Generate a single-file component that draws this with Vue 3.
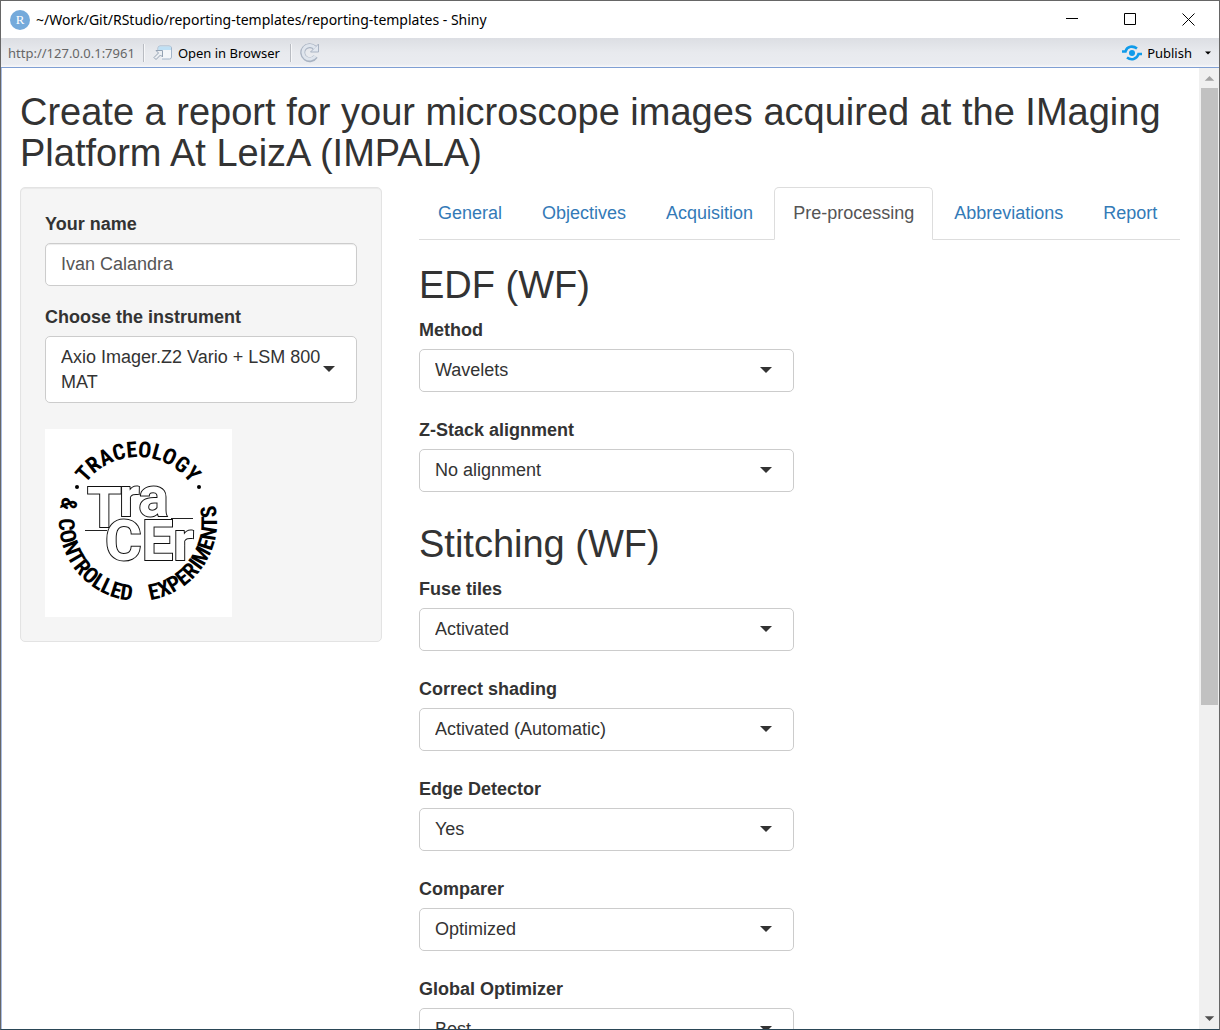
<script setup>
import { ref } from 'vue'

const name = ref('Ivan Calandra')
const instrument = ref('Axio Imager.Z2 Vario + LSM 800 MAT')
const tabs = ['General', 'Objectives', 'Acquisition', 'Pre-processing', 'Abbreviations', 'Report']
const active = ref('Pre-processing')

const sections = ref([
  {
    title: 'EDF (WF)',
    fields: [
      { id: 'method', label: 'Method', value: 'Wavelets' },
      { id: 'zstack', label: 'Z-Stack alignment', value: 'No alignment' }
    ]
  },
  {
    title: 'Stitching (WF)',
    fields: [
      { id: 'fuse', label: 'Fuse tiles', value: 'Activated' },
      { id: 'shading', label: 'Correct shading', value: 'Activated (Automatic)' },
      { id: 'edge', label: 'Edge Detector', value: 'Yes' },
      { id: 'comparer', label: 'Comparer', value: 'Optimized' },
      { id: 'optimizer', label: 'Global Optimizer', value: 'Best' }
    ]
  }
])
</script>

<template>
  <div class="window">
    <header class="titlebar">
      <svg class="app-icon" viewBox="0 0 20 20" aria-hidden="true">
        <circle cx="10" cy="10" r="10" fill="#75aadb" />
        <text x="10" y="14" text-anchor="middle" class="app-letter">R</text>
      </svg>
      <span class="title">~/Work/Git/RStudio/reporting-templates/reporting-templates - Shiny</span>
      <div class="window-controls">
        <button type="button" aria-label="Minimize">
          <svg width="13" height="13" viewBox="0 0 13 13"><path d="M0 5.500H12" /></svg>
        </button>
        <button type="button" aria-label="Maximize">
          <svg width="13" height="13" viewBox="0 0 13 13"><path d="M.5 .5H11.5V11.5H.5Z" /></svg>
        </button>
        <button type="button" aria-label="Close">
          <svg width="13" height="13" viewBox="0 0 13 13"><path d="M.5 .5L12.5 12.5M12.5 .5L.5 12.5" /></svg>
        </button>
      </div>
    </header>

    <div class="toolbar">
      <span class="url">http://127.0.0.1:7961</span>
      <i class="divider"></i>
      <button type="button" class="open">
        <svg width="20" height="16" viewBox="0 0 20 16" aria-hidden="true">
          <path d="M5 5V3Q5 1 7 1H16Q18.500 1 18.500 3V12Q18.500 14 16.500 14H9" fill="#f4f6f9" stroke="#a3b4c8" />
          <path d="M5.500 1.500H18V5H5.500Z" fill="#bfe0f5" />
          <path d="M3 5.500H9.500V12L7.500 10L3 14.500L1 12.500L5.500 8Z" fill="#eceff3" stroke="#94a2b3" />
        </svg>
        Open in Browser
      </button>
      <i class="divider"></i>
      <button type="button" class="reload" aria-label="Reload">
        <svg width="20" height="20" viewBox="0 0 20 20">
          <path d="M15.600 13.500A7 7 0 1 1 14.500 4.600" fill="none" stroke="#a9b3c2" stroke-width="5" />
          <path d="M18.500 1V9H10.500Z" fill="#e1e7ef" stroke="#a9b3c2" />
          <path d="M15.300 13.200A6.800 6.800 0 1 1 15 5" fill="none" stroke="#dfe5ed" stroke-width="3" />
        </svg>
      </button>
      <button type="button" class="publish">
        <svg width="20" height="16" viewBox="0 0 20 16" aria-hidden="true" fill="none" stroke="#0f9bea" stroke-width="2.600">
          <circle cx="10" cy="8" r="3" fill="#0f9bea" stroke="none" />
          <path d="M0 6.500H3.500C5 1 11 .5 15 3.500" />
          <path d="M20 9H16.500C15 14.500 9 15.500 5 12.500" />
        </svg>
        Publish
        <svg class="small-caret" width="6" height="4" viewBox="0 0 6 4" aria-hidden="true"><path d="M0 .5H6L3 3.500Z" /></svg>
      </button>
    </div>

    <div class="viewport">
      <div class="page">
        <h2 class="page-title">Create a report for your microscope images acquired at the IMaging Platform At LeizA (IMPALA)</h2>
        <div class="row">
          <aside class="side">
            <form class="well" @submit.prevent>
              <label for="name">Your name</label>
              <input id="name" v-model="name" class="control" type="text" />
              <label for="instrument" class="next">Choose the instrument</label>
              <div class="picker">
                <select id="instrument" v-model="instrument" class="control tall">
                  <option>Axio Imager.Z2 Vario + LSM 800 MAT</option>
                </select>
                <svg class="caret" viewBox="0 0 12 6" aria-hidden="true"><path d="M0 0H12L6 6Z" /></svg>
              </div>
              <svg class="logo" viewBox="0 0 187 188" role="img" aria-label="TraCEr logo">
                <defs>
                  <path id="arc-top" d="M28 93A65 65 0 0 1 158 93" />
                  <path id="arc-bottom" d="M93 14A79 79 0 0 0 93 172A79 79 0 0 0 93 14" />
                </defs>
                <rect width="187" height="188" fill="#fff" />
                <g class="ring">
                  <text><textPath href="#arc-top" startOffset="50%">TRACEOLOGY</textPath></text>
                  <text><textPath href="#arc-bottom" startOffset="21%">&amp;</textPath></text>
                  <text><textPath href="#arc-bottom" startOffset="36.500%">CONTROLLED</textPath></text>
                  <text><textPath href="#arc-bottom" startOffset="65.500%">EXPERIMENTS</textPath></text>
                </g>
                <circle cx="32" cy="58" r="2" />
                <circle cx="154" cy="58" r="2" />
                <path d="M40 101.500H62M126 89.500H148" stroke="#222" />
                <g class="mark">
                  <text x="42" y="98">T</text>
                  <text x="74" y="87">ra</text>
                  <text x="60" y="131">CEr</text>
                </g>
              </svg>
            </form>
          </aside>

          <main class="main">
            <nav class="tabs">
              <a v-for="tab in tabs" :key="tab" href="#" :class="{ active: tab === active }" @click.prevent="active = tab">{{ tab }}</a>
            </nav>
            <section v-for="section in sections" :key="section.title">
              <h2>{{ section.title }}</h2>
              <div v-for="field in section.fields" :key="field.id" class="field">
                <label :for="field.id">{{ field.label }}</label>
                <div class="picker">
                  <select :id="field.id" v-model="field.value" class="control">
                    <option>{{ field.value }}</option>
                  </select>
                  <svg class="caret" viewBox="0 0 12 6" aria-hidden="true"><path d="M0 0H12L6 6Z" /></svg>
                </div>
              </div>
            </section>
          </main>
        </div>
      </div>

      <div class="scrollbar" aria-hidden="true">
        <svg viewBox="0 0 20 20"><path d="M5 13L10 8L15 13Z" fill="#a3a3a3" /></svg>
        <div class="track"><div class="thumb"></div></div>
        <svg viewBox="0 0 20 20"><path d="M5 7L10 12L15 7Z" fill="#505050" /></svg>
      </div>
    </div>
  </div>
</template>

<style>
body {
  margin: 0;
}
</style>

<style scoped>
* {
  box-sizing: border-box;
}

.window {
  display: flex;
  flex-direction: column;
  height: 100vh;
  overflow: hidden;
  border: 1px solid #666;
  border-bottom-color: #2a4656;
  background: #fff;
  color: #333;
  font-family: "Liberation Sans", Arial, sans-serif;
  font-size: 18px;
  line-height: 25px;
}

button {
  border: 0;
  padding: 0;
  background: none;
  color: #000;
  font: inherit;
}

.titlebar {
  display: flex;
  flex: none;
  align-items: center;
  height: 37px;
  padding: 0 2px 0 9px;
  color: #000;
  font: 14px/20px "Noto Sans", "Open Sans", sans-serif;
}

.app-icon {
  width: 20px;
  height: 20px;
  margin-right: 6px;
}

.app-letter {
  fill: #fff;
  font: 13px "Liberation Serif", serif;
}

.window-controls {
  display: flex;
  height: 100%;
  margin-left: auto;
}

.window-controls button {
  display: grid;
  place-items: center;
  width: 58px;
}

.window-controls svg {
  fill: none;
  stroke: #000;
}

.toolbar {
  display: flex;
  flex: none;
  align-items: center;
  height: 30px;
  padding: 0 8px 0 7px;
  border-bottom: 1px solid #7f9fd3;
  background: linear-gradient(#dcdee3, #e8eaee 50%, #eaecf0 90%, #f8f8fa);
  font: 13px/20px "Noto Sans", "Open Sans", sans-serif;
}

.url {
  color: #666;
}

.divider {
  width: 2px;
  height: 18px;
  margin: 0 8px;
  border-left: 1px solid #b9bcc2;
  background: #f6f7f9;
}

.toolbar button {
  display: flex;
  align-items: center;
}

.toolbar .open {
  gap: 5px;
  padding-right: 2px;
}

.publish {
  gap: 5px;
  margin-left: auto;
}

.small-caret {
  margin-left: 8px;
}

.viewport {
  display: flex;
  flex: 1;
  min-height: 0;
  border-left: 1px solid #a9bde3;
}

.page {
  flex: 1;
  min-width: 0;
  overflow: hidden;
}

h2 {
  margin: 0;
  font-size: 38px;
  font-weight: 400;
  line-height: 41px;
}

.page-title {
  padding: 24px 18px 13px;
}

.row {
  display: flex;
}

.side {
  flex: none;
  width: 33.333%;
  padding: 0 19px 0 18px;
}

.main {
  flex: 1;
  min-width: 0;
  padding: 0 19px 0 18px;
}

.well {
  padding: 24px;
  border: 1px solid #e3e3e3;
  border-radius: 5px;
  background: #f5f5f5;
  box-shadow: inset 0 1px 1px rgba(0, 0, 0, 0.05);
}

label {
  display: block;
  margin-bottom: 6px;
  font-weight: 700;
}

.next {
  margin-top: 19px;
}

.control {
  display: block;
  width: 100%;
  height: 43px;
  margin: 0;
  padding: 0 30px 0 15px;
  border: 1px solid #ccc;
  border-radius: 5px;
  background: #fff;
  color: #333;
  font: inherit;
  appearance: none;
}

input.control {
  padding-right: 15px;
  color: #555;
  box-shadow: inset 0 1px 1px rgba(0, 0, 0, 0.075);
}

.tall {
  height: 67px;
  white-space: normal;
}

.picker {
  position: relative;
}

.caret {
  position: absolute;
  top: 50%;
  right: 22px;
  width: 12px;
  height: 6px;
  margin-top: -4px;
  fill: #333;
  pointer-events: none;
}

.logo {
  display: block;
  width: 187px;
  height: 188px;
  margin-top: 26px;
}

.ring {
  font: 700 22px "Roboto Condensed", "Roboto", sans-serif;
  text-anchor: middle;
}

.mark {
  fill: #fff;
  stroke: #111;
  stroke-width: 2px;
  paint-order: stroke;
  font: 700 56px "Roboto", sans-serif;
}

.tabs {
  display: flex;
  gap: 2px;
  margin-bottom: 25px;
  border-bottom: 1px solid #ddd;
}

.tabs a {
  margin-bottom: -1px;
  padding: 13px 18px;
  border: 1px solid transparent;
  border-radius: 5px 5px 0 0;
  color: #337ab7;
  text-decoration: none;
  white-space: nowrap;
}

.tabs .active {
  border-color: #ddd;
  border-bottom-color: #fff;
  background: #fff;
  color: #555;
}

section {
  margin-bottom: 32px;
}

section h2 {
  margin-bottom: 12px;
}

.field {
  width: 375px;
  max-width: 100%;
}

.field + .field {
  margin-top: 26px;
}

.scrollbar {
  display: flex;
  flex: none;
  flex-direction: column;
  width: 20px;
  padding-left: 1px;
  background: #f0f0f0;
}

.scrollbar svg {
  flex: none;
  height: 20px;
}

.track {
  flex: 1;
}

.thumb {
  height: 67%;
  margin: 0 1px;
  background: #c1c1c1;
}
</style>
